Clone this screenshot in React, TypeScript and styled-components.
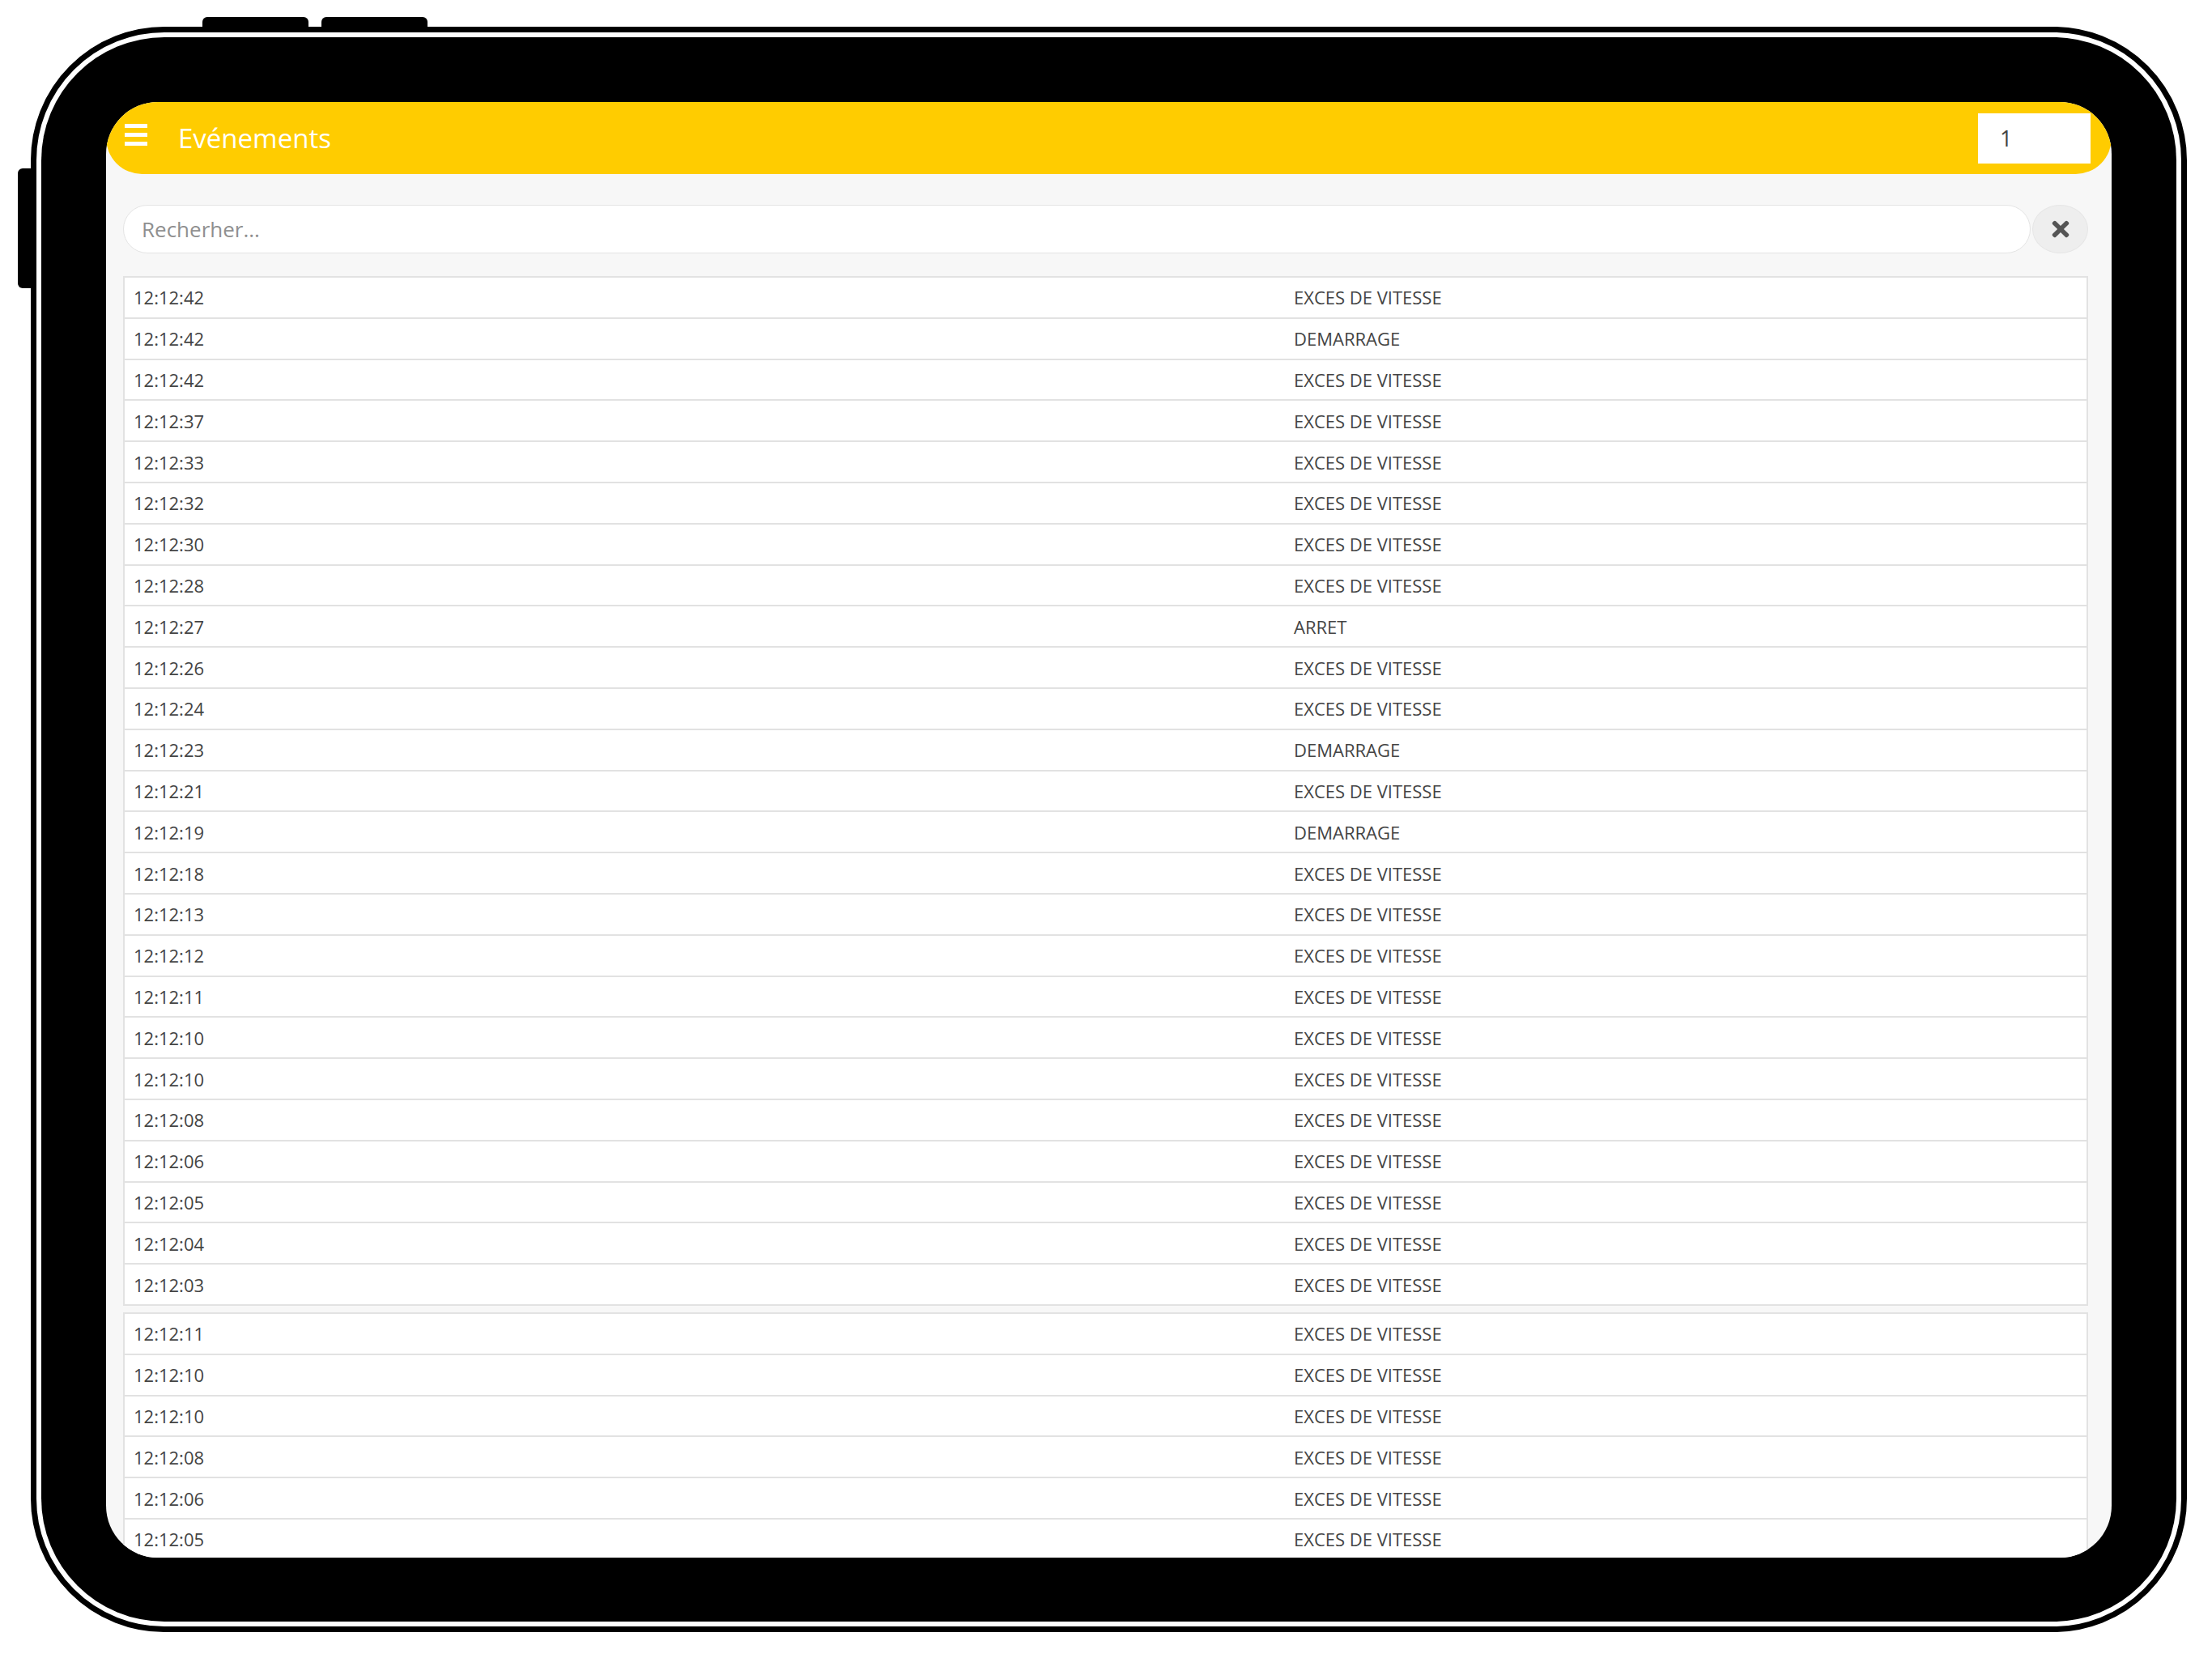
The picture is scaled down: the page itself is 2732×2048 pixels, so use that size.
import * as React from 'react';
import styled, { createGlobalStyle } from 'styled-components';
import { FaTimes } from 'react-icons/fa';

const GlobalStyle = createGlobalStyle`
  html, body {
    margin: 0;
    padding: 0;
    background: #ffffff;
  }

  body {
    font-family: 'Open Sans', 'Noto Sans', sans-serif;
  }
`;

const Page = styled.div`
  width: 2732px;
  height: 2048px;
  padding: 33px 0 0 38px;
  box-sizing: border-box;
  overflow: hidden;
`;

const Device = styled.div`
  position: relative;
  width: 2663px;
  height: 1983px;
  box-sizing: border-box;
  border: 7px solid #000;
  padding: 6px;
  border-radius: 165px;
  background: #fff;
`;

const TopButton = styled.div<{ $left: number }>`
  position: absolute;
  top: -19px;
  left: ${(p) => p.$left}px;
  width: 131px;
  height: 16px;
  background: #000;
  border-radius: 6px 6px 0 0;
`;

const SideButton = styled.div`
  position: absolute;
  left: -23px;
  top: 168px;
  width: 18px;
  height: 148px;
  background: #000;
  border-radius: 6px 0 0 6px;
`;

const Bezel = styled.div`
  height: 100%;
  box-sizing: border-box;
  background: #000;
  border-radius: 152px;
  padding: 80px 80px 79px 80px;
`;

const Screen = styled.div`
  height: 100%;
  background: #f7f7f7;
  border-radius: 64px;
  overflow: hidden;
  display: flex;
  flex-direction: column;
`;

const Header = styled.div`
  flex: 0 0 89px;
  display: flex;
  align-items: center;
  padding: 0 26px 0 23px;
  background: #ffcc00;
  border-radius: 45px;
`;

const MenuIcon = styled.svg`
  width: 28px;
  height: 27px;
  margin-top: -8px;
  flex: 0 0 auto;
`;

const Title = styled.div`
  margin-left: 38px;
  color: #fff;
  font-size: 33px;
  line-height: 1;
  flex: 1;
`;

const PageBox = styled.input`
  width: 139px;
  height: 62px;
  box-sizing: border-box;
  border: none;
  outline: none;
  padding: 0 0 0 27px;
  background: #fff;
  color: #444;
  font-family: 'Open Sans', sans-serif;
  font-size: 27px;
`;

const Content = styled.div`
  flex: 1;
  padding: 38px 29px 0 21px;
  display: flex;
  flex-direction: column;
`;

const SearchBar = styled.div`
  display: flex;
  gap: 2px;
  margin-bottom: 28px;
`;

const SearchInput = styled.input`
  flex: 1;
  height: 60px;
  box-sizing: border-box;
  border: 1.5px solid #e4e4e4;
  border-radius: 30px;
  background: #fff;
  padding: 0 0 0 22px;
  outline: none;
  font-family: 'Open Sans', sans-serif;
  font-size: 26px;
  color: #444;

  &::placeholder {
    color: #8f8f8f;
  }
`;

const ClearButton = styled.button`
  width: 69px;
  height: 60px;
  border-radius: 50%;
  border: 1.5px solid #e6e6e6;
  background: #eeeeee;
  display: flex;
  align-items: center;
  justify-content: center;
  padding: 0;
  color: #555;
  font-size: 30px;
`;

const Group = styled.div`
  border: 2px solid #e2e2e2;
  background: #fff;
  margin-bottom: 8px;
  flex: 0 0 auto;
`;

const Row = styled.div`
  display: grid;
  grid-template-columns: 1433px 1fr;
  align-items: center;
  height: 48.8px;
  color: #444;
  font-size: 22px;

  & + & {
    border-top: 2px solid #e2e2e2;
  }
`;

const Cell = styled.div`
  padding-left: 11px;
  white-space: nowrap;
`;

type Event = [string, string];

const SPEED = 'EXCES DE VITESSE';

const firstGroup: Event[] = [
  ['12:12:42', SPEED],
  ['12:12:42', 'DEMARRAGE'],
  ['12:12:42', SPEED],
  ['12:12:37', SPEED],
  ['12:12:33', SPEED],
  ['12:12:32', SPEED],
  ['12:12:30', SPEED],
  ['12:12:28', SPEED],
  ['12:12:27', 'ARRET'],
  ['12:12:26', SPEED],
  ['12:12:24', SPEED],
  ['12:12:23', 'DEMARRAGE'],
  ['12:12:21', SPEED],
  ['12:12:19', 'DEMARRAGE'],
  ['12:12:18', SPEED],
  ['12:12:13', SPEED],
  ['12:12:12', SPEED],
  ['12:12:11', SPEED],
  ['12:12:10', SPEED],
  ['12:12:10', SPEED],
  ['12:12:08', SPEED],
  ['12:12:06', SPEED],
  ['12:12:05', SPEED],
  ['12:12:04', SPEED],
  ['12:12:03', SPEED],
];

const secondGroup: Event[] = [
  ['12:12:11', SPEED],
  ['12:12:10', SPEED],
  ['12:12:10', SPEED],
  ['12:12:08', SPEED],
  ['12:12:06', SPEED],
  ['12:12:05', SPEED],
];

const EventGroup: React.FC<{ events: Event[] }> = ({ events }) => (
  <Group>
    {events.map(([time, label], i) => (
      <Row key={i}>
        <Cell>{time}</Cell>
        <Cell>{label}</Cell>
      </Row>
    ))}
  </Group>
);

const App: React.FC = () => {
  return (
    <Page>
      <GlobalStyle />
      <Device>
        <TopButton $left={205} />
        <TopButton $left={352} />
        <SideButton />
        <Bezel>
          <Screen>
            <Header>
              <MenuIcon viewBox="0 0 28 27">
                <rect x="0" y="0" width="28" height="5" fill="#fff" />
                <rect x="0" y="11" width="28" height="5" fill="#fff" />
                <rect x="0" y="22" width="28" height="5" fill="#fff" />
              </MenuIcon>
              <Title>Evénements</Title>
              <PageBox defaultValue="1" readOnly />
            </Header>
            <Content>
              <SearchBar>
                <SearchInput placeholder="Recherher..." />
                <ClearButton>
                  <FaTimes />
                </ClearButton>
              </SearchBar>
              <EventGroup events={firstGroup} />
              <EventGroup events={secondGroup} />
            </Content>
          </Screen>
        </Bezel>
      </Device>
    </Page>
  );
};

export default App;
